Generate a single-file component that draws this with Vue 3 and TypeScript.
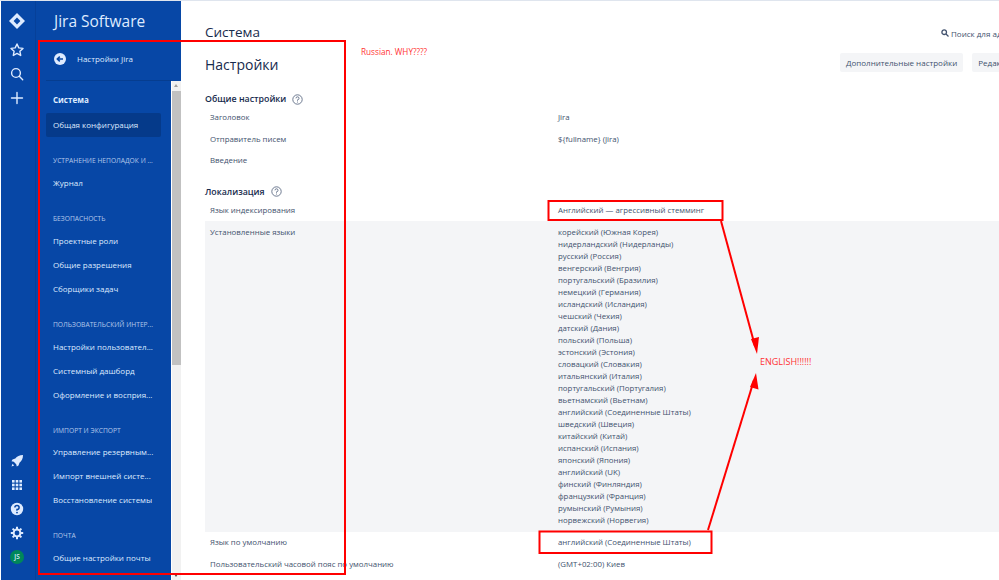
<script setup lang="ts">
type NavEntry = { kind: 'head' | 'item' | 'active' | 'sys'; text: string }
const nav: NavEntry[] = [
  { kind: 'sys', text: 'Система' },
  { kind: 'active', text: 'Общая конфигурация' },
  { kind: 'head', text: 'УСТРАНЕНИЕ НЕПОЛАДОК И ...' },
  { kind: 'item', text: 'Журнал' },
  { kind: 'head', text: 'БЕЗОПАСНОСТЬ' },
  { kind: 'item', text: 'Проектные роли' },
  { kind: 'item', text: 'Общие разрешения' },
  { kind: 'item', text: 'Сборщики задач' },
  { kind: 'head', text: 'ПОЛЬЗОВАТЕЛЬСКИЙ ИНТЕР...' },
  { kind: 'item', text: 'Настройки пользовател...' },
  { kind: 'item', text: 'Системный дашборд' },
  { kind: 'item', text: 'Оформление и восприя...' },
  { kind: 'head', text: 'ИМПОРТ И ЭКСПОРТ' },
  { kind: 'item', text: 'Управление резервным...' },
  { kind: 'item', text: 'Импорт внешней систе...' },
  { kind: 'item', text: 'Восстановление системы' },
  { kind: 'head', text: 'ПОЧТА' },
  { kind: 'item', text: 'Общие настройки почты' },
  { kind: 'item', text: 'Исходящая почта' },
]
const languages: string[] = [
  'корейский (Южная Корея)', 'нидерландский (Нидерланды)', 'русский (Россия)', 'венгерский (Венгрия)',
  'португальский (Бразилия)', 'немецкий (Германия)', 'исландский (Исландия)', 'чешский (Чехия)',
  'датский (Дания)', 'польский (Польша)', 'эстонский (Эстония)', 'словацкий (Словакия)',
  'итальянский (Италия)', 'португальский (Португалия)', 'вьетнамский (Вьетнам)',
  'английский (Соединенные Штаты)', 'шведский (Швеция)', 'китайский (Китай)', 'испанский (Испания)',
  'японский (Япония)', 'английский (UK)', 'финский (Финляндия)', 'французкий (Франция)',
  'румынский (Румыния)', 'норвежский (Норвегия)',
]
</script>

<template>
  <div class="page">
    <aside class="rail">
      <div class="rail-group">
        <svg class="logo" width="18" height="18" viewBox="0 0 18 18">
          <path d="M9 1 17 9 9 17 1 9Z" fill="#deebff" />
          <path d="M9 5.6 12.4 9 9 12.4 5.6 9Z" fill="#0747a6" />
        </svg>
        <svg class="ric" width="16" height="16" viewBox="0 0 16 16" fill="none" stroke="#deebff" stroke-width="1.4" stroke-linejoin="round">
          <path d="M8 2l1.8 3.9 4.2.5-3.1 2.9.8 4.2L8 11.4l-3.700 2.100.8-4.200L2 6.400l4.200-.5z" />
        </svg>
        <svg class="ric" width="16" height="16" viewBox="0 0 16 16" fill="none" stroke="#deebff" stroke-width="1.4" stroke-linecap="round">
          <circle cx="7" cy="7" r="4.4" /><path d="M10.3 10.3l3.4 3.4" />
        </svg>
        <svg class="ric" width="16" height="16" viewBox="0 0 16 16" fill="none" stroke="#deebff" stroke-width="1.4" stroke-linecap="round">
          <path d="M8 2.5v11M2.5 8h11" />
        </svg>
      </div>
      <div class="rail-group">
        <svg class="ric" width="16" height="16" viewBox="0 0 16 16" fill="#deebff">
          <path d="M14 2c-3.500 0-6 1.200-7.700 3.500L3.500 6.500 2.500 8.200l2.300.6 2.400 2.400.6 2.300 1.700-1 1-2.800C12.800 8 14 5.500 14 2z" />
          <path d="M3.500 10.800l1.700 1.700-2.700 1z" />
        </svg>
        <svg class="ric" width="16" height="16" viewBox="0 0 16 16" fill="#deebff">
          <rect x="3" y="3" width="2.600" height="2.600" /><rect x="6.700" y="3" width="2.600" height="2.600" /><rect x="10.400" y="3" width="2.600" height="2.600" />
          <rect x="3" y="6.700" width="2.600" height="2.600" /><rect x="6.700" y="6.700" width="2.600" height="2.600" /><rect x="10.400" y="6.700" width="2.600" height="2.600" />
          <rect x="3" y="10.400" width="2.600" height="2.600" /><rect x="6.700" y="10.400" width="2.600" height="2.600" /><rect x="10.400" y="10.400" width="2.600" height="2.600" />
        </svg>
        <svg class="ric" width="16" height="16" viewBox="0 0 16 16">
          <circle cx="8" cy="8" r="6.200" fill="#deebff" />
          <path d="M5.900 6.500A2.100 2.100 0 1 1 8 8.600v1.100" fill="none" stroke="#0747a6" stroke-width="1.500" />
          <circle cx="8" cy="11.600" r=".9" fill="#0747a6" />
        </svg>
        <svg class="ric" width="16" height="16" viewBox="0 0 16 16" fill="none" stroke="#deebff">
          <circle cx="8" cy="8" r="3.400" stroke-width="2" />
          <path d="M8 1.800v2.400M8 11.800v2.400M1.800 8h2.400M11.800 8h2.400M3.600 3.600l1.700 1.700M10.700 10.700l1.700 1.700M3.600 12.400l1.700-1.700M10.700 5.300l1.700-1.700" stroke-width="2" />
        </svg>
        <div class="avatar">JS</div>
      </div>
    </aside>

    <nav class="side">
      <div class="brand">Jira Software</div>
      <div class="back">
        <svg width="14" height="14" viewBox="0 0 14 14">
          <circle cx="7" cy="7" r="6" fill="#deebff" />
          <path d="M10 7H4.500M6.800 4.600 4.300 7l2.500 2.400" fill="none" stroke="#0747a6" stroke-width="1.500" />
        </svg>
        <span>Настройки Jira</span>
      </div>
      <div class="side-body">
        <div class="nav-list">
          <div v-for="n in nav" :key="n.text" :class="['nav', n.kind]">{{ n.text }}</div>
        </div>
        <div class="scrollbar">
          <div class="sb-arrow up"></div>
          <div class="sb-track"><div class="sb-thumb"></div></div>
          <div class="sb-arrow down"></div>
        </div>
      </div>
    </nav>

    <main class="main">
      <div class="top">
        <h1 class="crumb">Система</h1>
        <div class="search">
          <svg width="8" height="8" viewBox="0 0 8 8" fill="none" stroke="#42526e" stroke-width="1.300">
            <circle cx="3.200" cy="3.200" r="2.300" /><path d="M5 5l2.500 2.500" />
          </svg>
          <span>Поиск для администратора</span>
        </div>
      </div>
      <div class="title-row">
        <h2 class="title">Настройки</h2>
        <div class="actions">
          <div class="btn">Дополнительные настройки</div>
          <div class="btn">Редактировать настройки</div>
        </div>
      </div>

      <h3 class="section first">Общие настройки
        <svg width="11" height="11" viewBox="0 0 11 11" fill="none" stroke="#5e6c84" stroke-width=".9">
          <circle cx="5.500" cy="5.500" r="4.700" /><path d="M4 4.300a1.500 1.500 0 1 1 1.500 1.500v.9M5.500 7.600v.9" />
        </svg>
      </h3>
      <div class="row"><div>Заголовок</div><div>Jira</div></div>
      <div class="row"><div>Отправитель писем</div><div>${fullname} (Jira)</div></div>
      <div class="row"><div>Введение</div><div></div></div>

      <h3 class="section second">Локализация
        <svg width="11" height="11" viewBox="0 0 11 11" fill="none" stroke="#5e6c84" stroke-width=".9">
          <circle cx="5.500" cy="5.500" r="4.700" /><path d="M4 4.300a1.500 1.500 0 1 1 1.500 1.500v.9M5.500 7.600v.9" />
        </svg>
      </h3>
      <div class="row"><div>Язык индексирования</div><div>Английский — агрессивный стемминг</div></div>
      <div class="row langs">
        <div>Установленные языки</div>
        <div><div v-for="l in languages" :key="l" class="lang">{{ l }}</div></div>
      </div>
      <div class="row"><div>Язык по умолчанию</div><div>английский (Соединенные Штаты)</div></div>
      <div class="row"><div>Пользовательский часовой пояс по умолчанию</div><div>(GMT+02:00) Киев</div></div>
    </main>

    <svg class="marks" width="999" height="580" viewBox="0 0 999 580" fill="none" stroke="#f00" stroke-width="2">
      <rect x="39" y="40" width="306" height="533" />
      <rect x="548.500" y="200" width="174" height="19" />
      <rect x="539.500" y="530.500" width="172" height="21.500" />
      <path d="M721 220 755 345" />
      <path d="M708 529 754 379" />
      <path d="M757 353 751 338 759 336Z" fill="#f00" stroke="none" />
      <path d="M756 372 750 386 758.500 388.500Z" fill="#f00" stroke="none" />
    </svg>
    <div class="note russian">Russian. WHY????</div>
    <div class="note english">ENGLISH!!!!!!</div>
  </div>
</template>

<style>
html, body { margin: 0; background: #fff; }
</style>

<style scoped>
.page {
  position: relative;
  display: flex;
  width: 999px;
  height: 580px;
  overflow: hidden;
  background: #fff;
  border-top: 1px solid #dfe5ee;
  box-sizing: border-box;
  padding-left: 1px;
  font-family: "Open Sans", "Noto Sans", sans-serif;
  font-size: 8px;
  color: #42526e;
}
.rail {
  flex: 0 0 35px;
  background: #0747a6;
  display: flex;
  flex-direction: column;
  justify-content: space-between;
  align-items: center;
  padding: 11px 2px 16px 0;
  box-sizing: border-box;
  border-right: 1px solid #064099;
}
.rail-group { display: flex; flex-direction: column; align-items: center; gap: 8px; }
.rail-group .logo { margin-bottom: 4px; }
.avatar {
  width: 14px;
  height: 14px;
  margin-top: 1px;
  border-radius: 50%;
  background: #00875a;
  color: #deebff;
  font-size: 6.500px;
  font-weight: 600;
  line-height: 14px;
  text-align: center;
}
.side {
  flex: 0 0 145px;
  background: #0747a6;
  display: flex;
  flex-direction: column;
  color: #deebff;
}
.brand {
  height: 39px;
  padding-left: 18px;
  font-size: 15.500px;
  line-height: 40px;
  box-sizing: border-box;
}
.back {
  height: 41px;
  margin: 0 10px;
  border-bottom: 1px solid #063d8f;
  display: flex;
  align-items: center;
  gap: 10px;
  padding: 0 0 3px 7px;
  box-sizing: border-box;
}
.side-body { flex: 1; display: flex; min-height: 0; }
.nav-list { flex: 1; padding: 7px 10px 0; overflow: hidden; }
.nav {
  height: 24px;
  line-height: 24px;
  padding-left: 7px;
  white-space: nowrap;
}
.nav.sys { font-weight: 700; }
.nav.active { background: #053a8a; border-radius: 2px; margin-top: 1px; }
.nav.head {
  height: 20.850px;
  line-height: 21px;
  margin-top: 13px;
  font-size: 6.700px;
  color: #b3c8ea;
}
.scrollbar {
  flex: 0 0 10px;
  background: #f1f1f1;
  border-left: 1px solid #fff;
  display: flex;
  flex-direction: column;
  box-sizing: border-box;
}
.sb-arrow { height: 10px; position: relative; }
.sb-arrow::after {
  content: "";
  position: absolute;
  left: 2px;
  border-left: 2.500px solid transparent;
  border-right: 2.500px solid transparent;
}
.sb-arrow.up::after { top: 3px; border-bottom: 3px solid #a0a0a0; }
.sb-arrow.down::after { bottom: 3px; border-top: 3px solid #505050; }
.sb-track { flex: 1; }
.sb-thumb { height: 274px; background: #c1c1c1; }
.main { flex: 1; min-width: 0; padding: 0 0 0 24px; overflow: hidden; }
.top { display: flex; justify-content: space-between; align-items: center; height: 38px; padding-top: 4px; box-sizing: border-box; white-space: nowrap; }
.crumb { margin: 20px 0 0; font-size: 13.500px; font-weight: 500; color: #172b4d; }
.search { width: 58px; flex: none; overflow: hidden; display: flex; align-items: center; gap: 2px; margin-top: 22px; }
.search svg { flex: none; }
.title-row { display: flex; justify-content: space-between; align-items: center; height: 37px; white-space: nowrap; }
.title { margin: 14px 0 0; font-size: 14px; font-weight: 500; color: #172b4d; }
.actions { flex: none; width: 159px; display: flex; gap: 9px; overflow: hidden; margin-top: 9px; }
.btn { flex: none; height: 19px; line-height: 19px; padding: 0 6px; background: #f4f5f7; border-radius: 2px; }
.section { display: flex; align-items: center; gap: 6px; margin: 14px 0 0; height: 16px; font-size: 8.800px; font-weight: 600; color: #172b4d; }
.section.first { margin-top: 15px; }
.section.second { margin-top: 11.500px; }
.row { display: grid; grid-template-columns: 348px 1fr; padding-left: 5px; min-height: 21.700px; line-height: 21.700px; white-space: nowrap; font-size: 7.850px; }
.langs { background: #f4f5f7; padding: 5px 0 6px 5px; box-sizing: border-box; line-height: 12px; }
.lang { height: 12px; }
.marks { position: absolute; left: 0; top: 0; pointer-events: none; }
.note { position: absolute; color: #f33; font-size: 8.200px; line-height: 12px; white-space: nowrap; }
.russian { left: 361px; top: 45px; }
.english { left: 760px; top: 355px; font-size: 9px; }
</style>
